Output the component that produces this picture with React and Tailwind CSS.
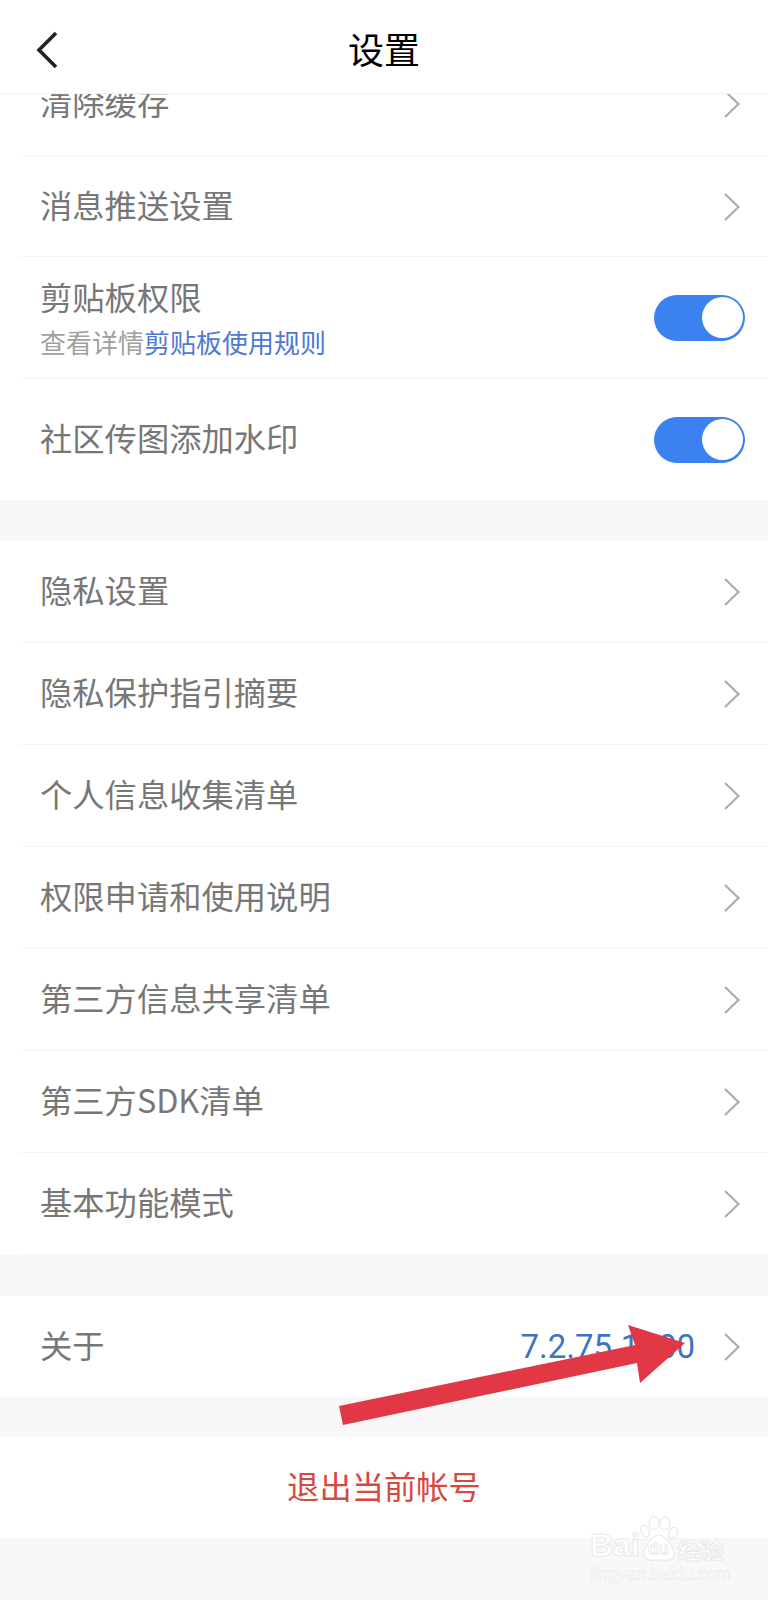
const FONT = "font-['Noto_Sans_CJK_SC','Noto_Sans',sans-serif]";

const Chevron = () => (
  <svg width="18" height="30" viewBox="0 0 18 30" fill="none" className="shrink-0">
    <path d="M2 2 L15.5 15 L2 28" stroke="#adadad" strokeWidth="2.2" />
  </svg>
);

const Toggle = () => (
  <div className="w-[91px] h-[46px] rounded-full bg-[#3b82f0] flex items-center justify-end pr-[2px]">
    <div className="w-[41px] h-[41px] rounded-full bg-white" />
  </div>
);

const Row = ({ label, height = 'h-[102px]' }) => (
  <div className={`${height} ml-5 pl-5 pr-[27px] flex items-center justify-between border-b border-[#f5f5f5]`}>
    <span className="text-[32.3px] leading-none pb-[5px] text-[#777777]">{label}</span>
    <Chevron />
  </div>
);

const Gap = ({ height = 'h-[41px]' }) => <div className={`${height} bg-[#f8f8f8]`} />;

const privacyRows = ['隐私设置', '隐私保护指引摘要', '个人信息收集清单', '权限申请和使用说明', '第三方信息共享清单', '第三方SDK清单', '基本功能模式'];

export default function App() {
  return (
    <div className={`relative w-[768px] h-[1600px] overflow-hidden bg-white ${FONT}`}>
      {/* Header */}
      <header className="relative h-[94px] flex items-center justify-center border-b border-[#f2f2f2]">
        <svg width="24" height="38" viewBox="0 0 24 38" fill="none" className="absolute left-[35px] top-[31px]">
          <path d="M21 2 L4 19 L21 36" stroke="#222222" strokeWidth="3.6" />
        </svg>
        <h1 className="text-[36px] leading-none pt-[2px] font-normal text-black">设置</h1>
      </header>

      {/* Scrolled list, first row is cut by the header */}
      <div className="h-[63px] overflow-hidden flex flex-col justify-end">
        <div className="shrink-0"><Row label="清除缓存" height="h-[106px]" /></div>
      </div>
      <Row label="消息推送设置" height="h-[100px]" />

      <div className="h-[122px] ml-5 pl-5 pr-[23px] flex items-center justify-between border-b border-[#f5f5f5]">
        <div className="flex flex-col gap-[16px]">
          <span className="text-[32.3px] leading-none text-[#777777]">剪贴板权限</span>
          <span className="text-[26px] leading-none text-[#a0a0a0]">查看详情<span className="text-[#4f78d2]">剪贴板使用规则</span></span>
        </div>
        <Toggle />
      </div>
      <div className="h-[121px] ml-5 pl-5 pr-[23px] flex items-center justify-between">
        <span className="text-[32.3px] leading-none pb-[5px] text-[#777777]">社区传图添加水印</span>
        <Toggle />
      </div>

      <Gap />
      {privacyRows.map((label) => (
        <Row key={label} label={label} />
      ))}
      <Gap />

      <div className="h-[101px] ml-5 pl-5 pr-[27px] flex items-center justify-between">
        <span className="text-[32.3px] leading-none pb-[5px] text-[#777777]">关于</span>
        <div className="flex items-center gap-[28px]">
          <span className="text-[33px] leading-none text-[#3b74c4] font-['Roboto',sans-serif]">7.2.75.1200</span>
          <Chevron />
        </div>
      </div>
      <Gap height="h-[40px]" />

      <div className="h-[101px] flex items-center justify-center">
        <span className="text-[32.3px] leading-none pb-[5px] text-[#d8483f]">退出当前帐号</span>
      </div>
      <Gap height="h-[62px]" />

      {/* Annotation arrow */}
      <svg width="768" height="1600" viewBox="0 0 768 1600" className="absolute left-0 top-0 pointer-events-none">
        <polygon points="339,1406 343,1425 637,1363 640,1383 685,1343 628,1325 635,1345" fill="#e23744" />
      </svg>

      {/* Watermark */}
      <div className="absolute left-[590px] top-[1516px] w-[140px] pointer-events-none text-white font-['Liberation_Sans',sans-serif] [-webkit-text-stroke:1px_#e9e9e9]">
        <div className="flex items-end h-[46px]">
          <span className="text-[32px] leading-none font-bold pb-[1px]">Bai</span>
          <div className="relative w-[38px] h-[46px] shrink-0">
            <svg width="38" height="46" viewBox="0 0 38 46" fill="#ffffff" stroke="#e9e9e9" strokeWidth="1.2">
              <ellipse cx="5" cy="15" rx="4" ry="6" transform="rotate(-25 5 15)" />
              <ellipse cx="14" cy="7" rx="5" ry="6.5" />
              <ellipse cx="25" cy="7.5" rx="5" ry="6.5" />
              <ellipse cx="33" cy="17" rx="4" ry="6" transform="rotate(25 33 17)" />
              <path d="M19 19 C26 19 36 34 34 40 C32 46 24 44 19 44 C14 44 6 46 4 40 C2 34 12 19 19 19 Z" />
            </svg>
            <span className="absolute left-[8px] bottom-[5px] text-[17px] leading-none font-bold [-webkit-text-stroke:0.8px_#e9e9e9]">du</span>
          </div>
          <span className="text-[23px] leading-none font-bold font-['Noto_Sans_CJK_SC',sans-serif] pb-[1px]">经验</span>
        </div>
        <div className="text-[17.5px] leading-none mt-[4px] whitespace-nowrap [-webkit-text-stroke:0.6px_#e9e9e9]">jingyan.baidu.com</div>
      </div>
    </div>
  );
}
